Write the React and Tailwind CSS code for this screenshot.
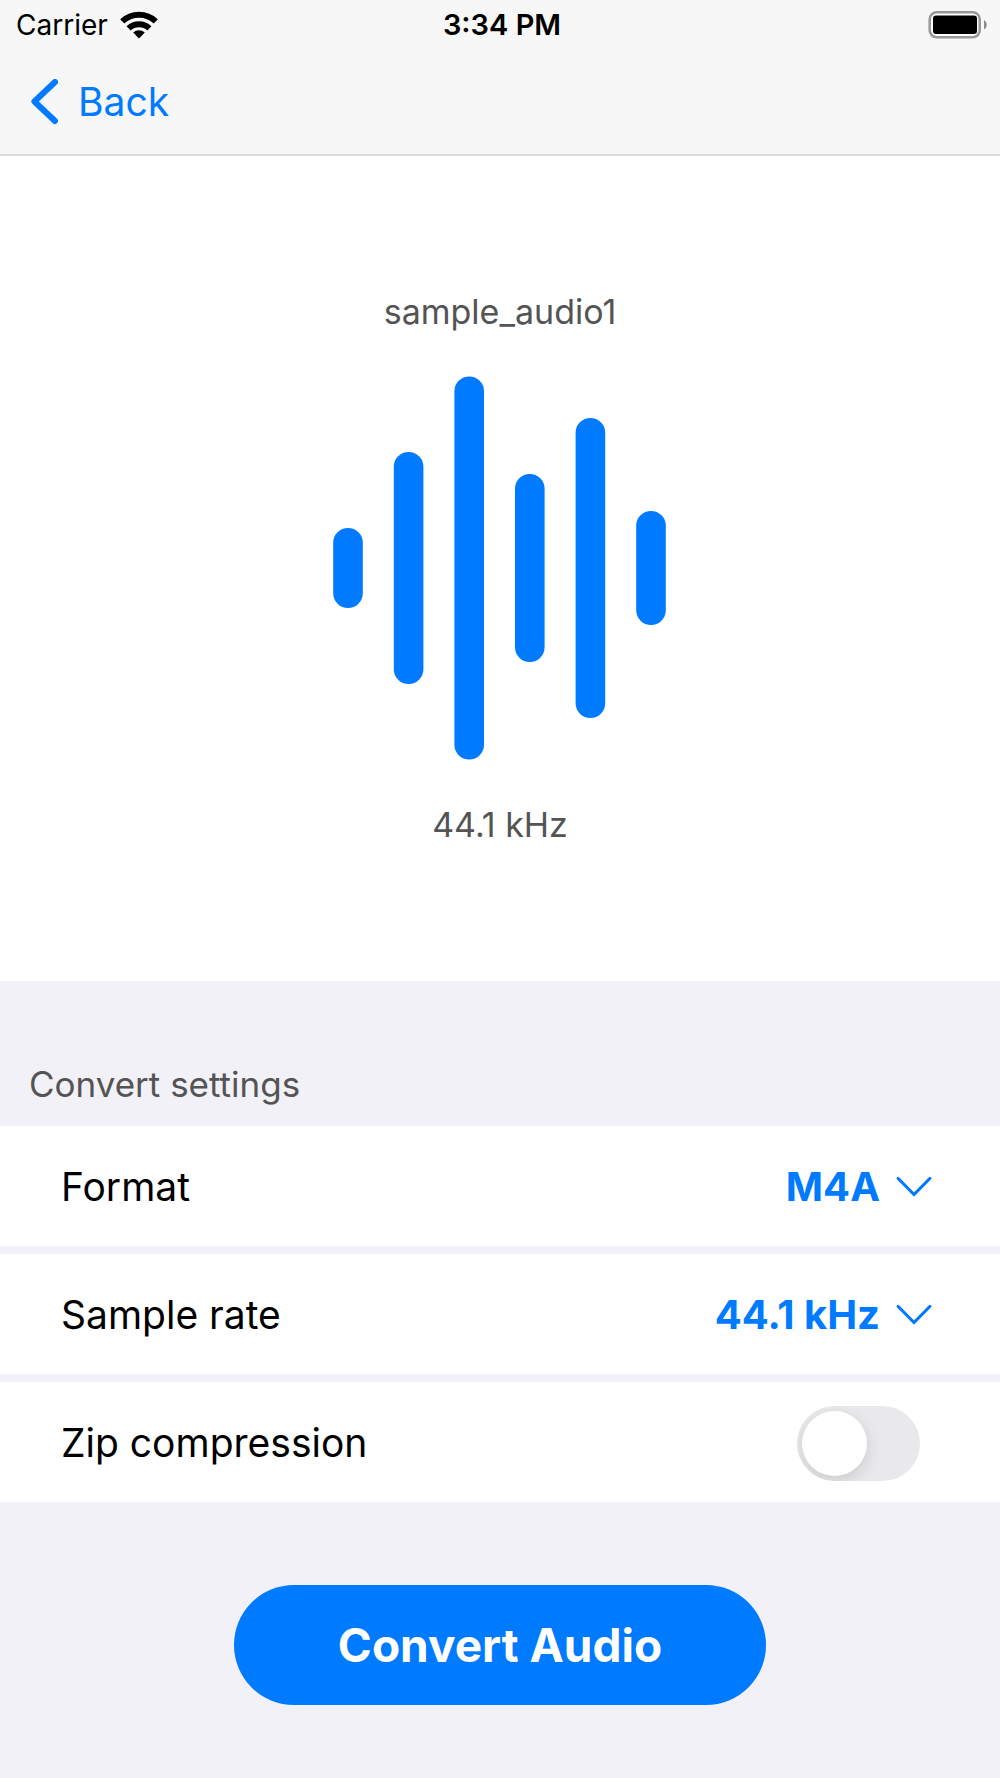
import { useState } from "react";

const BARS = [
  { x: 15, height: 80 },
  { x: 75.6, height: 232 },
  { x: 136.2, height: 383 },
  { x: 196.8, height: 188 },
  { x: 257.4, height: 300 },
  { x: 318, height: 114 },
];

function WifiIcon() {
  return (
    <svg width="38" height="28" viewBox="0 0 38 28" fill="none" stroke="#000" aria-hidden="true">
      <path d="M2.2 10.4A24.4 24.4 0 0 1 35.8 10.4" strokeWidth="6" />
      <path d="M8.6 17.4A15.2 15.2 0 0 1 29.4 17.4" strokeWidth="6" />
      <path d="M19 27.4L13.2 21.6A8.4 8.4 0 0 1 24.8 21.6Z" fill="#000" stroke="none" />
    </svg>
  );
}

function BatteryIcon() {
  return (
    <svg width="60" height="28" viewBox="0 0 60 28" aria-label="Battery full" role="img">
      <rect x="1.7" y="1.3" width="50" height="25" rx="7" fill="#fff" stroke="#999" strokeWidth="2.6" />
      <rect x="5" y="4.6" width="44" height="18.5" rx="3" fill="#000" />
      <path d="M56 9a5.6 5.6 0 0 1 0 9.6z" fill="#8c8c8c" />
    </svg>
  );
}

function ChevronDown() {
  return (
    <svg width="36" height="22" viewBox="0 0 36 22" fill="none" stroke="#007aff" strokeWidth="3.2" strokeLinecap="round" strokeLinejoin="round" aria-hidden="true" className="pointer-events-none shrink-0">
      <path d="M2.2 2.5L18 18.5L33.8 2.5" />
    </svg>
  );
}

function SelectRow({ id, label, options }) {
  return (
    <div className="flex min-h-[120px] items-center justify-between bg-white pt-0.5 pr-[68px] pl-[61px]">
      <label htmlFor={id} className="text-[39px] leading-[48px]">{label}</label>
      <div className="flex items-center gap-4">
        <select id={id} className="field-sizing-content appearance-none bg-transparent text-right text-[40px] leading-[48px] font-bold text-[#007aff]">
          {options.map((option) => (
            <option key={option}>{option}</option>
          ))}
        </select>
        <ChevronDown />
      </div>
    </div>
  );
}

export default function App() {
  const [zip, setZip] = useState(false);
  return (
    <div className="flex min-h-screen flex-col bg-[#f2f1f7] font-['Inter',sans-serif] text-black">
      <header className="border-b-2 border-[#dcdcdc] bg-[#f7f7f7]">
        <div className="grid grid-cols-[1fr_auto_1fr] items-center pt-2 pr-3 pl-4">
          <div className="flex items-center gap-3">
            <span className="text-[28px] leading-[34px]">Carrier</span>
            <WifiIcon />
          </div>
          <time className="text-[29px] leading-[34px] font-semibold">3:34 PM</time>
          <div className="flex justify-end">
            <BatteryIcon />
          </div>
        </div>
        <nav className="flex px-[30px] pt-9 pb-7">
          <button type="button" className="flex items-center gap-5 text-[39px] leading-[48px] text-[#007aff]">
            <svg width="28" height="46" viewBox="0 0 28 46" fill="none" stroke="#007aff" strokeWidth="6" strokeLinecap="round" strokeLinejoin="round" aria-hidden="true">
              <path d="M25 3L4.4 22.5L25 42" />
            </svg>
            Back
          </button>
        </nav>
      </header>

      <main className="flex flex-1 flex-col">
        <section className="flex flex-col items-center gap-11 bg-white py-[136px] text-[34px] leading-[40px] text-[#545454]">
          <h1>sample_audio1</h1>
          <svg width="334" height="385" viewBox="0 0 334 385" fill="#007aff" role="img" aria-label="Waveform">
            {BARS.map((bar) => (
              <rect key={bar.x} x={bar.x - 14.8} y={192 - bar.height / 2} width="29.6" height={bar.height} rx="14.8" />
            ))}
          </svg>
          <p>44.1 kHz</p>
        </section>

        <section>
          <h2 className="px-[29px] pt-[81px] pb-5 text-[35px] leading-[44px] text-[#545454]">Convert settings</h2>
          <div className="flex flex-col gap-2">
            <SelectRow id="format" label="Format" options={["M4A", "MP3", "WAV"]} />
            <SelectRow id="rate" label="Sample rate" options={["44.1 kHz", "48 kHz"]} />
            <div className="flex min-h-[120px] items-center justify-between bg-white pt-0.5 pr-20 pl-[61px]">
              <label htmlFor="zip" className="text-[39px] leading-[48px]">Zip compression</label>
              <input
                id="zip"
                type="checkbox"
                role="switch"
                checked={zip}
                onChange={(e) => setZip(e.target.checked)}
                className="flex h-[75px] w-[123px] appearance-none items-center overflow-hidden rounded-full bg-[#e9e9eb] px-[5px] before:block before:size-[65px] before:rounded-full before:bg-white before:shadow-[0_5px_16px_rgba(0,0,0,0.13)] checked:justify-end checked:bg-[#34c759]"
              />
            </div>
          </div>
        </section>

        <div className="flex justify-center px-[30px] pt-[83px] pb-[72px]">
          <button type="button" className="min-h-[120px] w-full max-w-[532px] rounded-full bg-[#007aff] text-[46px] leading-[58px] font-bold text-white">
            Convert Audio
          </button>
        </div>
      </main>
    </div>
  );
}
